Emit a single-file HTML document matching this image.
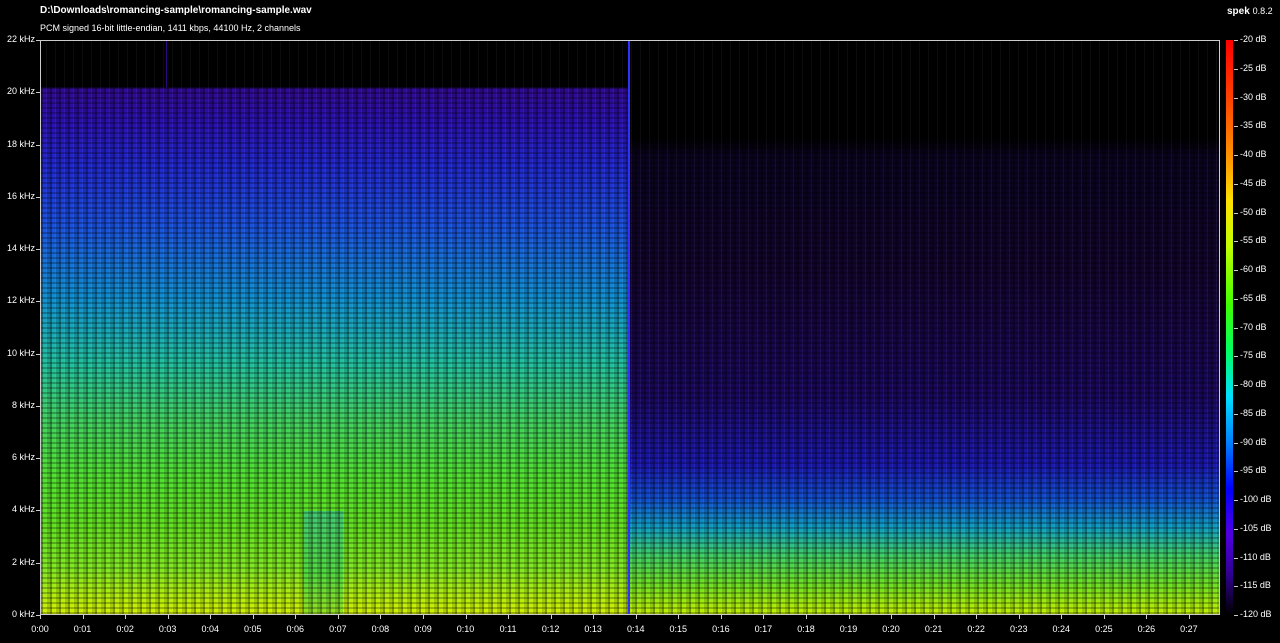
<!DOCTYPE html>
<html><head><meta charset="utf-8"><style>
body{margin:0;width:1280px;height:643px;background:#000;overflow:hidden;position:relative;font-family:"Liberation Sans",sans-serif;color:#fff}
.t{position:absolute;font-size:9px;white-space:nowrap}
#plot{position:absolute;left:40px;top:40px;width:1180px;height:575px;box-sizing:border-box;border:1px solid #ccc;overflow:hidden;background:#000}
.seg{position:absolute;top:0;height:100%}
#cb{position:absolute;left:1226px;top:40px;width:7px;height:575px;background:linear-gradient(#ff0000 0%,#ff4000 10%,#ff9000 20%,#ffe000 28%,#c0ff00 36%,#40ff00 46%,#00ff60 54%,#00e0ff 62%,#0080ff 70%,#0000ff 78%,#5000e0 86%,#300090 93%,#000 100%)}
.tk{position:absolute;background:#ccc}
</style></head><body>
<div class="t" style="left:40px;top:5px;font-weight:bold;font-size:10px">D:\Downloads\romancing-sample\romancing-sample.wav</div>
<div class="t" style="left:40px;top:23px">PCM signed 16-bit little-endian, 1411 kbps, 44100 Hz, 2 channels</div>
<div class="t" style="left:1227px;top:6px;font-size:10px"><b>spek</b> <span style="font-size:9px">0.8.2</span></div>
<div id="plot">
 <div class="seg" style="left:0;width:588px;background:linear-gradient(#000 0%,#000 8%,#300a90 8.3%,#2a10b0 14%,#2028d0 22%,#1a50e0 32%,#1090d0 45%,#20c0a0 56%,#40d060 66%,#50e030 76%,#60e020 84%,#80e820 92%,#d0f000 100%)"></div>
 <div class="seg" style="left:262px;width:40px;top:82%;height:18%;background:linear-gradient(#40c870,#50d840 60%,#90e020)"></div>
 <div class="seg" style="left:588px;width:592px;background:linear-gradient(#000 0%,#000 17%,#0a0320 20%,#12052e 40%,#1a0860 62%,#1a18b0 74%,#1050d0 80%,#10a0c0 85%,#40d060 90%,#70e020 95%,#c0f000 100%)"></div>
 <div class="seg" style="left:0;width:100%;background:repeating-linear-gradient(90deg,rgba(0,0,0,.35) 0 2px,rgba(0,0,0,0) 2px 5px,rgba(255,255,255,.05) 5px 6px,rgba(0,0,0,.15) 6px 9px)"></div>
 <div class="seg" style="left:0;width:100%;background:repeating-linear-gradient(0deg,rgba(0,0,0,.25) 0 2px,rgba(0,0,0,0) 2px 5px)"></div>
 <div class="seg" style="left:587px;width:2px;background:#3030ff"></div>
 <div class="seg" style="left:125px;width:1px;height:8%;background:#300880"></div>
</div>
<div id="cb"></div>
<div id="ax"></div>
<script>
var h='';
for(var i=0;i<=11;i++){var y=615-i*575/11;h+='<div class="t" style="right:1245px;top:'+(y-6)+'px">'+(i*2)+' kHz</div><div class="tk" style="left:36px;top:'+y+'px;width:4px;height:1px"></div>';}
var s=1180/27.73;
for(var i=0;i<=27;i++){var x=40+i*s;h+='<div class="t" style="left:'+(x-10)+'px;top:624px;width:20px;text-align:center">0:'+(i<10?'0':'')+i+'</div><div class="tk" style="left:'+x+'px;top:615px;width:1px;height:4px"></div>';}
for(var i=0;i<=20;i++){var y=40+i*575/20;h+='<div class="t" style="left:1240px;top:'+(y-6)+'px">-'+(20+i*5)+' dB</div><div class="tk" style="left:1234px;top:'+y+'px;width:4px;height:1px"></div>';}
document.getElementById('ax').innerHTML=h;
</script>
</body></html>
